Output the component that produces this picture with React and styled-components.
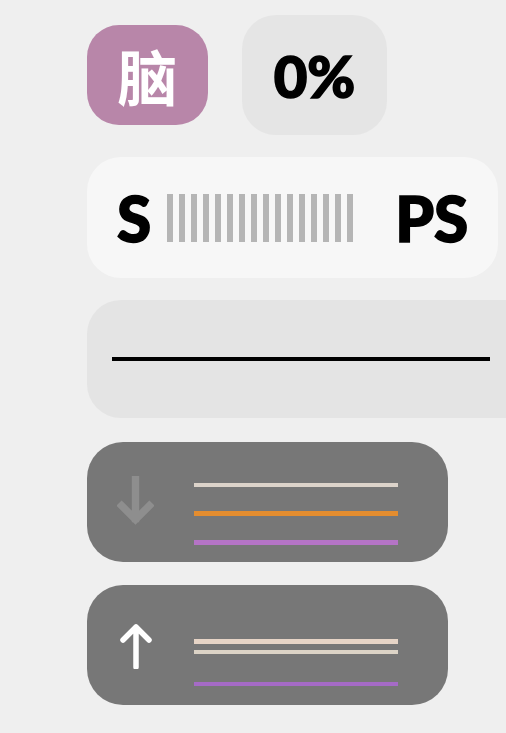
import React from "react";
import styled, { createGlobalStyle } from "styled-components";

const Global = createGlobalStyle`
  html, body {
    margin: 0;
    padding: 0;
    background: #efefef;
    overflow: hidden;
  }
  body {
    font-family: Lato, "Noto Sans", "Noto Sans CJK SC", sans-serif;
  }
`;

const Page = styled.div`
  display: flex;
  flex-direction: column;
  gap: 22px;
  padding: 15px 0 0 87px;
  width: 600px;
`;

const TopRow = styled.div`
  display: flex;
  align-items: center;
  gap: 34px;
`;

const BrainBadge = styled.div`
  width: 121px;
  height: 100px;
  border-radius: 32px;
  background: #b886a9;
  color: #fff;
  display: flex;
  align-items: center;
  justify-content: center;
  font-family: "Noto Sans CJK SC", sans-serif;
  font-weight: 700;
  font-size: 60px;
  line-height: 1;
`;

const PercentBox = styled.div`
  width: 145px;
  height: 120px;
  border-radius: 34px;
  background: #e5e5e5;
  display: flex;
  align-items: center;
  justify-content: center;
  font-weight: 900;
  font-size: 58px;
  color: #000;
  -webkit-text-stroke: 1.6px #000;
`;

const ScaleBar = styled.div`
  width: 411px;
  height: 121px;
  box-sizing: border-box;
  border-radius: 34px;
  background: #f7f7f7;
  display: flex;
  align-items: center;
  padding: 0 0 0 30px;
`;

const Label = styled.span`
  font-weight: 900;
  font-size: 62px;
  line-height: 1;
  color: #000;
  -webkit-text-stroke: 1.6px #000;
  margin-left: ${({ $ml }) => $ml || 0}px;
`;

const Ticks = styled.div`
  display: flex;
  gap: 6px;
  margin-left: 16px;
`;

const Tick = styled.div`
  width: 6px;
  height: 48px;
  background: #b5b5b5;
`;

const LineBox = styled.div`
  width: 440px;
  height: 118px;
  border-radius: 34px 0 0 34px;
  background: #e4e4e4;
  display: flex;
  align-items: center;
  padding-left: 25px;
  box-sizing: border-box;
  margin-bottom: 2px;
`;

const BlackLine = styled.div`
  width: 378px;
  height: 4px;
  background: #000;
`;

const Card = styled.div`
  width: 361px;
  height: 120px;
  border-radius: 36px;
  background: #777777;
  display: flex;
  align-items: center;
  padding-left: 30px;
  box-sizing: border-box;

  & + & {
    margin-top: 1px;
  }
`;

const IconSlot = styled.div`
  width: 37px;
  display: flex;
  justify-content: center;
`;

const Lines = styled.div`
  margin-left: 40px;
  width: 204px;
  height: 120px;
  position: relative;
`;

const Stripe = styled.div`
  position: absolute;
  left: 0;
  right: 0;
  top: ${({ $top }) => $top}px;
  height: ${({ $h }) => $h || 4}px;
  background: ${({ $c }) => $c};
`;

const DownArrow = () => (
  <svg width="40" height="52" viewBox="0 0 40 52">
    <path
      d="M20 2 V44 M5 30 L20 45 L35 30"
      fill="none"
      stroke="#8e8e8e"
      strokeWidth="8"
      strokeLinecap="square"
    />
  </svg>
);

const UpArrow = () => (
  <svg width="36" height="48" viewBox="0 0 36 48">
    <path
      d="M18 46 V6 M5 19 L18 6 L31 19"
      fill="none"
      stroke="#ffffff"
      strokeWidth="5.5"
      strokeLinecap="round"
      strokeLinejoin="round"
    />
  </svg>
);

export default function App() {
  return (
    <>
      <Global />
      <Page>
        <TopRow>
          <BrainBadge>脑</BrainBadge>
          <PercentBox>0%</PercentBox>
        </TopRow>
        <ScaleBar>
          <Label>S</Label>
          <Ticks>
            {Array.from({ length: 16 }).map((_, i) => (
              <Tick key={i} />
            ))}
          </Ticks>
          <Label $ml={42}>PS</Label>
        </ScaleBar>
        <LineBox>
          <BlackLine />
        </LineBox>
        <Card>
          <IconSlot>
            <DownArrow />
          </IconSlot>
          <Lines>
            <Stripe $top={41} $h={4} $c="#dcd3ca" />
            <Stripe $top={69} $h={5} $c="#e48d2f" />
            <Stripe $top={98} $h={5} $c="#b574c6" />
          </Lines>
        </Card>
        <Card>
          <IconSlot>
            <UpArrow />
          </IconSlot>
          <Lines>
            <Stripe $top={54} $h={5} $c="#e6d4c6" />
            <Stripe $top={65} $h={4} $c="#dcd3c6" />
            <Stripe $top={97} $h={4} $c="#a56bc6" />
          </Lines>
        </Card>
      </Page>
    </>
  );
}
